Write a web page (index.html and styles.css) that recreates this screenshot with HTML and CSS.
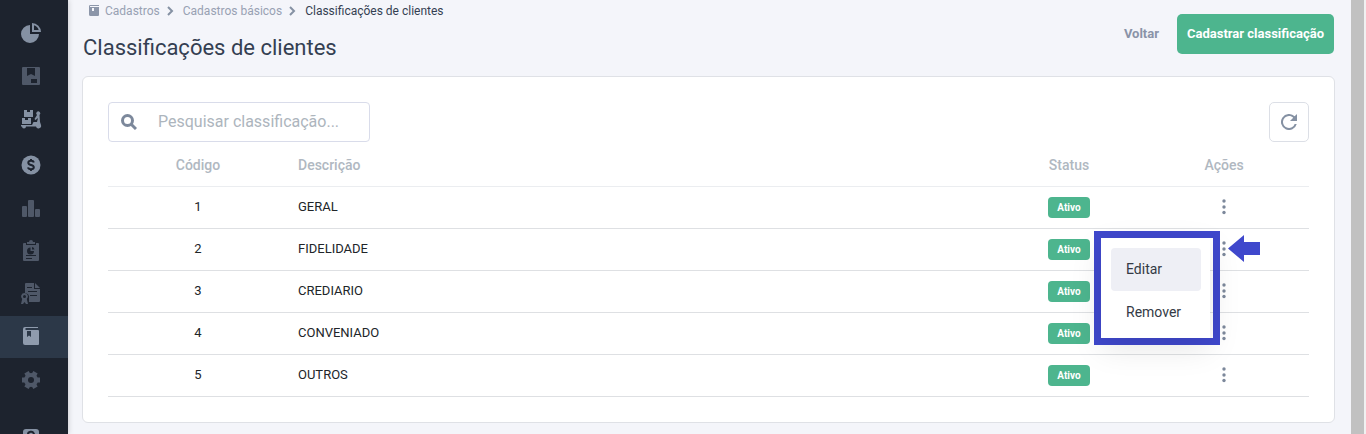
FILE: index.html
```html
<!DOCTYPE html>
<html lang="pt-BR">
<head>
    <meta charset="UTF-8">
    <meta name="viewport" content="width=device-width, initial-scale=1.0">
    <title>Classificações de clientes</title>
    <link rel="stylesheet" href="styles.css">
</head>
<body>
    <div class="app">
        <!-- Sidebar -->
        <nav class="sidebar">
            <div class="nav-group">
                <a href="#" class="nav-item bright" aria-label="Dashboard">
                    <svg viewBox="0 1 22 22"><path d="M10 3v9h9a9 9 0 1 1-9-9z"/><path fill-rule="evenodd" d="M12 1a9 9 0 0 1 9 9h-9zM14 3.300V8h4.700A7 7 0 0 0 14 3.300z"/></svg>
                </a>
                <a href="#" class="nav-item" aria-label="Produtos">
                    <svg viewBox="0 0 22 22"><path fill-rule="evenodd" d="M3 1h16a1 1 0 0 1 1 1v16a1 1 0 0 1-1 1H3a1 1 0 0 1-1-1V2a1 1 0 0 1 1-1zm4 1v8l4-2 4 2V2zm4 11v4h6v-4z"/></svg>
                </a>
                <a href="#" class="nav-item bright" aria-label="Entregas">
                    <svg viewBox="0 0 22 22"><path d="M4 1h3v2h3V1h3v7H4zM2 9h3v2h3V9h3v6H2z"/><path d="M17 6a2 2 0 1 1 2.500 0L20 13l1 3a2.500 2.500 0 1 1-5 1.500H6a2 2 0 0 1-4 0H1V16h11l1.500-3h3.500l1-4-2.500 2-1-1z"/></svg>
                </a>
            </div>
            <div class="nav-group">
                <a href="#" class="nav-item bright" aria-label="Financeiro">
                    <svg viewBox="0 0 22 22"><circle cx="11" cy="11" r="9.500"/><path class="cut" d="M13.800 8.500C13.500 7.300 12.500 6.800 11 6.800c-1.600 0-2.700.7-2.700 2 0 3 5.500 1.500 5.500 4.500 0 1.300-1.200 2-2.800 2-1.500 0-2.700-.6-2.900-1.900M11 5v2M11 15v2"/></svg>
                </a>
                <a href="#" class="nav-item" aria-label="Relatórios">
                    <svg viewBox="0 0 22 22"><rect x="2" y="9" width="5" height="11" rx="1"/><rect x="8" y="3" width="6" height="17" rx="1"/><rect x="15" y="12" width="5" height="8" rx="1"/></svg>
                </a>
                <a href="#" class="nav-item" aria-label="Pedidos">
                    <svg viewBox="0 0 22 22"><path fill-rule="evenodd" d="M4 3h2v2h10V3h2a1 1 0 0 1 1 1v16a1 1 0 0 1-1 1H4a1 1 0 0 1-1-1V4a1 1 0 0 1 1-1zm2 12v1h10v-1zm0 3v1h6v-1z"/><path d="M7 2h2a2 2 0 0 1 4 0h2v2H7z"/><path class="hole" d="M10.500 7.500v3.500H14a3.500 3.500 0 1 1-3.500-3.500zM12 7a3 3 0 0 1 2.500 2.500H12z"/></svg>
                </a>
                <a href="#" class="nav-item" aria-label="Fiscal">
                    <svg viewBox="0 0 22 22"><path fill-rule="evenodd" d="M6 0h8v6h6v12a1 1 0 0 1-1 1H9v-4a4 4 0 0 0-4-5V1a1 1 0 0 1 1-1zm1 4v1h5V4zm1 4v1h9V8zm2 4v1h7v-1z"/><path d="M15 0l5 5h-5z"/><path fill-rule="evenodd" d="M4.500 10a3.500 3.500 0 0 1 2.300 6.100L8 21H6l-1.500-2L3 21H1l1.200-4.900A3.500 3.500 0 0 1 4.500 10zm0 2a1.500 1.500 0 1 0 0 3 1.500 1.500 0 0 0 0-3z"/></svg>
                </a>
                <a href="#" class="nav-item active" aria-label="Cadastros">
                    <svg viewBox="0 0 22 22"><path fill-rule="evenodd" d="M5 1h13v1H5.500v2H18a1 1 0 0 1 1 1v13a1 1 0 0 1-1 1H5a2 2 0 0 1-2-2V3a2 2 0 0 1 2-2zm2 4v6l2-1.500 2 1.500V5z"/></svg>
                </a>
                <a href="#" class="nav-item" aria-label="Configurações">
                    <svg viewBox="0 0 22 22"><circle cx="11" cy="11" r="7"/><path class="teeth" d="M2 11h18M6.500 3.200l9 15.600M15.500 3.200l-9 15.600"/><circle class="hole" cx="11" cy="11" r="3"/></svg>
                </a>
            </div>
            <div class="nav-group last">
                <a href="#" class="nav-item bright" aria-label="Ajuda">
                    <svg viewBox="0 0 22 22"><rect x="3" y="2" width="16" height="18" rx="3"/><path class="cut" d="M8 8a3 3 0 1 1 4 2.500q-1 .5-1 2.500"/></svg>
                </a>
            </div>
        </nav>

        <main class="content">
            <header class="page-header">
                <div>
                    <div class="breadcrumb">
                        <svg class="crumb-icon" viewBox="0 0 12 12"><path fill-rule="evenodd" d="M2 0h9v1H2v1h9v8a1 1 0 0 1-1 1H2.500A1.500 1.500 0 0 1 1 9.500v-8A1.500 1.500 0 0 1 2 0zm2 3v3h2V3z"/></svg>
                        <a href="#">Cadastros</a>
                        <svg class="chevron" viewBox="0 0 8 10"><path d="M2 1l4 4-4 4"/></svg>
                        <a href="#">Cadastros básicos</a>
                        <svg class="chevron" viewBox="0 0 8 10"><path d="M2 1l4 4-4 4"/></svg>
                        <span class="current">Classificações de clientes</span>
                    </div>
                    <h1>Classificações de clientes</h1>
                </div>
                <div class="header-actions">
                    <button class="btn-back">Voltar</button>
                    <button class="btn-primary">Cadastrar classificação</button>
                </div>
            </header>

            <section class="card">
                <div class="toolbar">
                    <label class="search">
                        <svg viewBox="0 0 16 16"><circle cx="6.500" cy="6.500" r="5"/><path d="M10.200 10.200L15 15"/></svg>
                        <input type="text" placeholder="Pesquisar classificação..." aria-label="Pesquisar classificação">
                    </label>
                    <button class="btn-refresh" aria-label="Atualizar">
                        <svg viewBox="4 4 16 16"><path d="M17.650 6.350A8 8 0 1 0 19.730 14h-2.080A6 6 0 1 1 12 6c1.660 0 3.140.69 4.220 1.780L13 11h7V4z"/></svg>
                    </button>
                </div>

                <table class="table">
                    <thead>
                        <tr>
                            <th class="col-code">Código</th>
                            <th>Descrição</th>
                            <th class="col-status">Status</th>
                            <th class="col-actions">Ações</th>
                        </tr>
                    </thead>
                    <tbody>
                        <tr>
                            <td class="col-code">1</td>
                            <td>GERAL</td>
                            <td class="col-status"><span class="badge">Ativo</span></td>
                            <td class="col-actions"><button class="dots" aria-label="Ações"><svg viewBox="0 0 4 16"><circle cx="2" cy="2" r="1.700"/><circle cx="2" cy="8" r="1.700"/><circle cx="2" cy="13.500" r="1.700"/></svg></button></td>
                        </tr>
                        <tr>
                            <td class="col-code">2</td>
                            <td>FIDELIDADE</td>
                            <td class="col-status"><span class="badge">Ativo</span></td>
                            <td class="col-actions">
                                <button class="dots" aria-label="Ações"><svg viewBox="0 0 4 16"><circle cx="2" cy="2" r="1.700"/><circle cx="2" cy="8" r="1.700"/><circle cx="2" cy="13.500" r="1.700"/></svg></button>
                                <div class="menu-frame">
                                    <div class="menu">
                                        <button class="menu-item selected">Editar</button>
                                        <button class="menu-item">Remover</button>
                                    </div>
                                </div>
                                <svg class="arrow" viewBox="0 0 32 27"><path d="M0 13.500L16 0v7h16v13H16v7z"/></svg>
                            </td>
                        </tr>
                        <tr>
                            <td class="col-code">3</td>
                            <td>CREDIARIO</td>
                            <td class="col-status"><span class="badge">Ativo</span></td>
                            <td class="col-actions"><button class="dots" aria-label="Ações"><svg viewBox="0 0 4 16"><circle cx="2" cy="2" r="1.700"/><circle cx="2" cy="8" r="1.700"/><circle cx="2" cy="13.500" r="1.700"/></svg></button></td>
                        </tr>
                        <tr>
                            <td class="col-code">4</td>
                            <td>CONVENIADO</td>
                            <td class="col-status"><span class="badge">Ativo</span></td>
                            <td class="col-actions"><button class="dots" aria-label="Ações"><svg viewBox="0 0 4 16"><circle cx="2" cy="2" r="1.700"/><circle cx="2" cy="8" r="1.700"/><circle cx="2" cy="13.500" r="1.700"/></svg></button></td>
                        </tr>
                        <tr>
                            <td class="col-code">5</td>
                            <td>OUTROS</td>
                            <td class="col-status"><span class="badge">Ativo</span></td>
                            <td class="col-actions"><button class="dots" aria-label="Ações"><svg viewBox="0 0 4 16"><circle cx="2" cy="2" r="1.700"/><circle cx="2" cy="8" r="1.700"/><circle cx="2" cy="13.500" r="1.700"/></svg></button></td>
                        </tr>
                    </tbody>
                </table>
            </section>
        </main>

        <div class="scrollbar"></div>
    </div>
</body>
</html>
```
FILE: styles.css
```css
* {
    box-sizing: border-box;
}

body {
    margin: 0;
    font-family: Roboto, "Liberation Sans", sans-serif;
    background-color: #f4f5fa;
    color: #212529;
}

a {
    color: inherit;
    text-decoration: none;
}

button {
    font-family: inherit;
    border: none;
    background: none;
    padding: 0;
    cursor: pointer;
}

.app {
    display: flex;
    height: 100vh;
    overflow: hidden;
}

/* Sidebar */
.sidebar {
    flex: 0 0 68px;
    padding-top: 13px;
    background-color: #1d232e;
    box-shadow: 0 0 6px rgba(0, 0, 0, 0.2);
    overflow: hidden;
}

.nav-group {
    display: flex;
    flex-direction: column;
    gap: 1px;
    margin-bottom: 3px;
}

.nav-group.last {
    margin-top: 16px;
}

.nav-item {
    display: flex;
    align-items: center;
    justify-content: center;
    height: 42px;
    padding-right: 6px;
    color: #4f5868;
}

.nav-item svg {
    width: 22px;
    height: 22px;
    fill: currentColor;
}

.nav-item.bright {
    color: #8591a3;
}

.nav-item.active {
    background-color: #2c3848;
    color: #8f9bad;
}

.nav-item .cut {
    fill: none;
    stroke: #1d232e;
    stroke-width: 2;
}

.nav-item .hole {
    fill: #1d232e;
}

.nav-item .teeth {
    stroke: currentColor;
    stroke-width: 5;
}

/* Page header */
.content {
    flex: 1;
    min-width: 0;
    padding: 0 16px 0 14px;
}

.page-header {
    display: flex;
    justify-content: space-between;
    height: 76px;
}

.breadcrumb {
    display: flex;
    align-items: center;
    height: 22px;
    padding-left: 6px;
    font-size: 12px;
    color: #98a1b3;
}

.crumb-icon {
    width: 12px;
    height: 12px;
    margin-right: 5px;
    fill: #8c96a9;
}

.chevron {
    width: 8px;
    height: 10px;
    margin: 0 9px 0 6px;
    fill: none;
    stroke: #8591a3;
    stroke-width: 2;
}

.breadcrumb .current {
    color: #343f52;
}

h1 {
    margin: 11px 0 0 1px;
    font-size: 22px;
    line-height: 30px;
    font-weight: 400;
    color: #343f52;
}

.header-actions {
    display: flex;
    gap: 18px;
    height: 40px;
    margin: 14px 1px 0 0;
}

.btn-back {
    padding-bottom: 2px;
    font-size: 13px;
    font-weight: 700;
    color: #8a93a8;
}

.btn-primary {
    padding: 0 10px 2px;
    border-radius: 5px;
    font-size: 13px;
    font-weight: 700;
    color: #fff;
    background-color: #4db58e;
}

/* Card */
.card {
    padding: 25px;
    background-color: #fff;
    border: 1px solid #dfe1e6;
    border-radius: 6px;
}

.toolbar {
    display: flex;
    justify-content: space-between;
}

.search {
    display: flex;
    align-items: center;
    width: 262px;
    height: 40px;
    padding-left: 12px;
    border: 1px solid #d9dcea;
    border-radius: 4px;
}

.search svg {
    flex: none;
    width: 16px;
    height: 16px;
    fill: none;
    stroke: #7c889b;
    stroke-width: 3;
}

.search input {
    flex: 1;
    min-width: 0;
    margin-left: 21px;
    padding: 0 0 2px;
    border: none;
    outline: none;
    background: none;
    font-family: inherit;
    font-size: 16px;
}

.search input::placeholder {
    color: #adb5bd;
}

.btn-refresh {
    display: flex;
    align-items: center;
    justify-content: center;
    width: 40px;
    height: 40px;
    border: 1px solid #dcdfe6;
    border-radius: 5px;
}

.btn-refresh svg {
    width: 16px;
    height: 16px;
    fill: #8591a3;
}

/* Table */
.table {
    width: 100%;
    table-layout: fixed;
    border-collapse: separate;
    border-spacing: 0;
    font-size: 13px;
}

.table th,
.table td {
    height: 42px;
    padding: 0 10px 2px;
    border-bottom: 1px solid #dee0e3;
    text-align: left;
}

.table th {
    height: 45px;
    padding: 2px 10px 0;
    border-bottom-color: #ebedf0;
    font-size: 14px;
    font-weight: 500;
    color: #b0b8c1;
}

.table .col-code {
    width: 180px;
    text-align: center;
}

.table .col-status {
    width: 140px;
    text-align: center;
}

.table td.col-status {
    padding-bottom: 0;
}

.table .col-actions {
    position: relative;
    width: 170px;
    text-align: center;
}

.badge {
    display: inline-block;
    padding: 0 9px;
    border-radius: 4px;
    font-size: 10px;
    font-weight: 700;
    line-height: 21px;
    color: #fff;
    background-color: #4db58e;
}

.dots {
    width: 20px;
    height: 24px;
    vertical-align: middle;
}

.dots svg {
    display: block;
    width: 4px;
    height: 16px;
    margin: 0 auto;
    fill: #7c889b;
}

/* Row menu */
.menu-frame {
    position: absolute;
    top: 2px;
    right: 89px;
    z-index: 1;
    width: 126px;
    border: 7px solid #3f48cc;
}

.menu {
    width: 109px;
    padding: 10px 9px 4px 10px;
    background-color: #fff;
    box-shadow: 0 10px 30px rgba(0, 0, 0, 0.1);
}

.menu-item {
    display: block;
    width: 100%;
    height: 43px;
    padding: 0 0 2px 15px;
    border-radius: 4px;
    font-size: 14px;
    text-align: left;
    color: #343a45;
}

.menu-item.selected {
    background-color: #eeeff5;
}

.arrow {
    position: absolute;
    top: 6px;
    right: 49px;
    width: 32px;
    height: 27px;
    fill: #3f48cc;
}

/* Scrollbar */
.scrollbar {
    flex: 0 0 15px;
    border-right: 2px solid #f1f1f1;
    background-color: #c1c1c1;
}
```
